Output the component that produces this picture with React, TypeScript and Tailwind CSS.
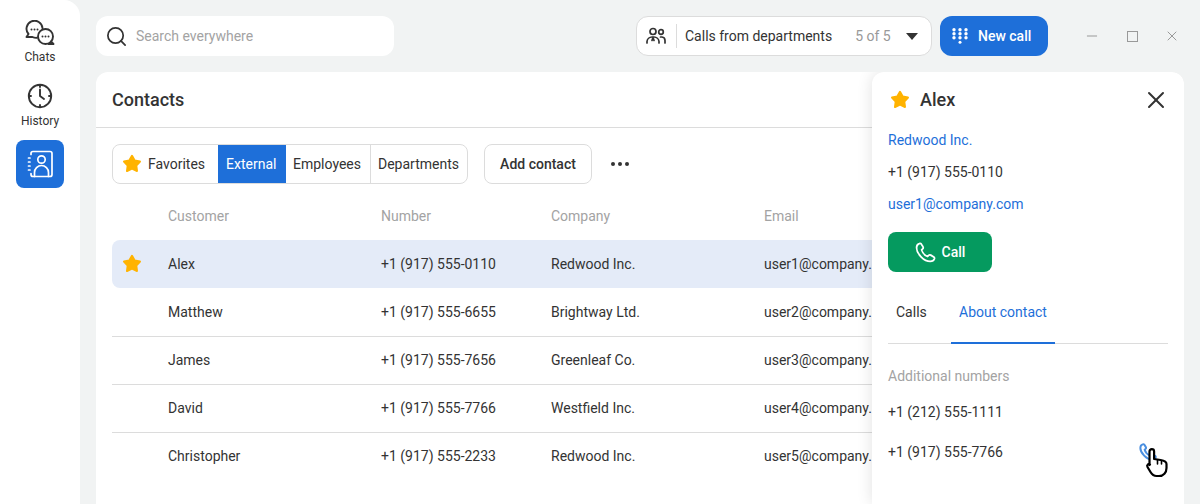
import { Minus, Search, X } from "lucide-react";

const ROWS = [
  { name: "Alex", number: "+1 (917) 555-0110", company: "Redwood Inc.", email: "user1@company.com", fav: true },
  { name: "Matthew", number: "+1 (917) 555-6655", company: "Brightway Ltd.", email: "user2@company.com" },
  { name: "James", number: "+1 (917) 555-7656", company: "Greenleaf Co.", email: "user3@company.com" },
  { name: "David", number: "+1 (917) 555-7766", company: "Westfield Inc.", email: "user4@company.com" },
  { name: "Christopher", number: "+1 (917) 555-2233", company: "Redwood Inc.", email: "user5@company.com" },
];

function Star({ size = 20 }: { size?: number }) {
  return (
    <svg width={size} height={size} viewBox="0 0 20 20" fill="#ffb300" stroke="#ffb300" strokeWidth="2" strokeLinejoin="round">
      <path d="M10 1.800l2.700 4.800 5.300 1-3.700 4 .7 5.400-5-2.300-5 2.300.7-5.400-3.700-4 5.300-1z" />
    </svg>
  );
}

function ChatsIcon() {
  return (
    <svg width="30" height="26" viewBox="0 0 30 26" fill="none" stroke="#333" strokeWidth="1.900" strokeLinecap="round" strokeLinejoin="round">
      <path d="M3.500 14A8 8 0 1 1 17.500 8.200M3.500 14L1.500 17H7.500a8 8 0 0 0 4.500.800" />
      <circle cx="20.500" cy="16.500" r="7.500" fill="#fff" />
      <path d="M26 21.500l2.500 2.500h-5" />
      <g fill="#333" stroke="none">
        <circle cx="6.500" cy="9.500" r="1" />
        <circle cx="9.500" cy="9.500" r="1" />
        <circle cx="12.500" cy="9.500" r="1" />
        <circle cx="17.500" cy="16.500" r="1" />
        <circle cx="20.500" cy="16.500" r="1" />
        <circle cx="23.500" cy="16.500" r="1" />
      </g>
    </svg>
  );
}

function HistoryIcon() {
  return (
    <svg width="26" height="26" viewBox="0 0 26 26" fill="none" stroke="#333" strokeWidth="1.900" strokeLinecap="round" strokeLinejoin="round">
      <circle cx="13" cy="13" r="11.200" />
      <path d="M13 6.500V13l4 3" />
      <path d="M13 2v2M13 22v2M2 13h2M22 13h2" />
    </svg>
  );
}

function ContactsIcon() {
  return (
    <svg width="26" height="28" viewBox="0 0 26 28" fill="none" stroke="#fff" strokeWidth="1.700" strokeLinecap="round" strokeLinejoin="round">
      <path d="M4 4.500V3.500A2 2 0 0 1 6 1.500h17a2 2 0 0 1 2 2v21a2 2 0 0 1-2 2H6a2 2 0 0 1-2-2V23.500" />
      <path d="M1.500 8h1.500M1.500 12h1.500M1.500 16h1.500M1.500 20h1.500" />
      <circle cx="14.500" cy="9.500" r="3.700" />
      <path d="M7.500 26.500v-4a7 7 0 0 1 14 0v4" />
    </svg>
  );
}

function PeopleIcon() {
  return (
    <svg width="20" height="18" viewBox="0 0 20 18" fill="none" stroke="#333" strokeWidth="1.700" strokeLinecap="round">
      <circle cx="7" cy="4.500" r="3" />
      <circle cx="15" cy="5" r="2.300" />
      <path d="M1 16v-1.500A5 5 0 0 1 6 10h2a5 5 0 0 1 5 4.500V16" />
      <path d="M7 10.500l-1 3M7 10.500l1 3" />
      <path d="M14.500 10H16a3.500 3.500 0 0 1 3 3.500V16" />
    </svg>
  );
}

function Dialpad() {
  return (
    <svg width="16" height="16" viewBox="0 0 16 16" fill="#fff">
      {[2, 8, 14].flatMap((x) => [1.700, 5.700, 9.700].map((y) => <circle key={`${x}-${y}`} cx={x} cy={y} r="1.700" />))}
      <circle cx="8" cy="14.200" r="1.500" />
    </svg>
  );
}

function PhoneIcon({ color = "#fff", size = 20, weight = 1.700 }: { color?: string; size?: number; weight?: number }) {
  return (
    <svg width={size} height={size} viewBox="0 0 20 20" fill="none" stroke={color} strokeWidth={weight} strokeLinejoin="round" strokeLinecap="round">
      <path d="M4 1.500C2.500 2 1.500 3.500 1.500 5.500C1.500 11 8.500 18.500 14.500 18.500C16.500 18.500 18 17.500 18.500 16C18.700 15.300 18.500 14.700 17.900 14.300L15 12.500C14.300 12.100 13.600 12.200 13 12.800L12 13.800C9.500 12.800 7 10 6.300 7.500L7.300 6.500C7.800 6 8 5.300 7.600 4.600L6 2C5.600 1.400 4.800 1.200 4 1.500Z" />
    </svg>
  );
}

function Cursor() {
  return (
    <svg width="24" height="30" viewBox="0 0 24 30" fill="#fff" stroke="#000" strokeWidth="2.200" strokeLinejoin="round" strokeLinecap="round">
      <path d="M5.500 17V3.500a2.300 2.300 0 0 1 4.600 0V11l6.500 1c3 .5 5.900 1 5.900 4v4c0 4.500-3 8-7.500 8h-2.500c-3 0-4.500-1.500-6-4l-3-5c-1.200-2 1.200-3.800 2.500-2.500z" />
      <path d="M13.500 12v4M17.500 13v3" strokeWidth="1.600" />
    </svg>
  );
}

export default function App() {
  return (
    <div className="flex h-[504px] w-full overflow-hidden bg-[#f1f3f3] font-['Roboto',sans-serif] text-sm text-[#333]">
      {/* Sidebar */}
      <aside className="flex w-20 shrink-0 flex-col items-center rounded-tr-2xl bg-white pt-5">
        <div className="flex h-[45px] flex-col items-center">
          <ChatsIcon />
          <span className="mt-[3px] text-xs leading-4">Chats</span>
        </div>
        <div className="mt-[18px] flex flex-col items-center">
          <HistoryIcon />
          <span className="mt-[4px] text-xs leading-4">History</span>
        </div>
        <div className="mt-[11px] flex h-12 w-12 items-center justify-center rounded-lg bg-[#1e6fd9]">
          <ContactsIcon />
        </div>
      </aside>

      <main className="flex min-w-0 flex-1 flex-col px-4 pt-4">
        {/* Top bar */}
        <header className="flex h-10 shrink-0 items-center">
          <div className="flex h-10 w-[298px] items-center rounded-xl bg-white pl-[9px]">
            <Search size={23} color="#333" strokeWidth={1.800} />
            <span className="ml-2 text-[#a3a3a3]">Search everywhere</span>
          </div>
          <div className="ml-[242px] flex h-10 w-[296px] items-center rounded-xl border border-[#dcdcdc] bg-white pl-[9px]">
            <PeopleIcon />
            <div className="ml-[10px] h-6 w-px bg-[#dcdcdc]" />
            <span className="ml-2">Calls from departments</span>
            <span className="ml-[23px] text-[#999]">5 of 5</span>
            <div className="ml-[15px] h-0 w-0 border-x-[6px] border-t-[7px] border-x-transparent border-t-[#333]" />
          </div>
          <div className="ml-2 flex h-10 w-[108px] items-center gap-[10px] rounded-xl bg-[#1e6fd9] pl-3 font-medium text-white">
            <Dialpad />
            <span>New call</span>
          </div>
          <div className="ml-[36px] flex items-center gap-6 text-[#999]">
            <Minus size={16} strokeWidth={1.500} />
            <div className="flex w-4 justify-center">
              <div className="h-[11px] w-[11px] border border-[#999]" />
            </div>
            <X size={16} strokeWidth={1.500} />
          </div>
        </header>

        {/* Contacts card */}
        <section className="relative mt-4 min-h-0 flex-1 overflow-hidden rounded-t-xl bg-white">
          <div className="flex h-[56px] items-center border-b border-[#dcdcdc] px-4">
            <h1 className="text-lg font-medium">Contacts</h1>
          </div>

          <div className="mt-4 ml-4 flex h-10 items-center">
            <div className="flex h-10 items-stretch overflow-hidden rounded-lg border border-[#dcdcdc]">
              <div className="flex w-[105px] items-center gap-[6px] pl-[9px]">
                <Star />
                <span>Favorites</span>
              </div>
              <div className="-my-px flex w-[68px] items-center bg-[#1e6fd9] pl-2 text-white">External</div>
              <div className="flex w-[85px] items-center border-r border-[#dcdcdc] pl-[7px]">Employees</div>
              <div className="flex w-[96px] items-center pl-[7px]">Departments</div>
            </div>
            <div className="ml-4 flex h-10 w-[108px] items-center justify-center rounded-lg border border-[#dcdcdc] font-medium">Add contact</div>
            <div className="ml-[19px] flex gap-[3px]">
              <span className="h-1 w-1 rounded-full bg-[#333]" />
              <span className="h-1 w-1 rounded-full bg-[#333]" />
              <span className="h-1 w-1 rounded-full bg-[#333]" />
            </div>
          </div>

          {/* Table */}
          <div className="mt-2 ml-4">
            <div className="flex h-[48px] items-center pl-14 text-[#a3a3a3]">
              <span className="w-[213px]">Customer</span>
              <span className="w-[170px]">Number</span>
              <span className="w-[213px]">Company</span>
              <span>Email</span>
            </div>
            {ROWS.map((row, i) => (
              <div
                key={row.name}
                className={
                  row.fav
                    ? "flex h-12 items-center rounded-l-lg bg-[#e4ebf8]"
                    : i === 1
                      ? "flex h-12 items-center"
                      : "flex h-12 items-center border-t border-[#dcdcdc] pb-px"
                }
              >
                <div className="flex w-14 pl-[10px]">{row.fav && <Star />}</div>
                <span className="w-[213px]">{row.name}</span>
                <span className="w-[170px]">{row.number}</span>
                <span className="w-[213px]">{row.company}</span>
                <span className="w-[108px] overflow-hidden whitespace-nowrap">{row.email}</span>
              </div>
            ))}
          </div>

          {/* Contact details panel */}
          <div className="absolute inset-y-0 right-0 w-[312px] rounded-t-xl bg-white px-4 shadow-[0_0_16px_rgba(0,0,0,0.12)]">
            <div className="flex h-[56px] items-center">
              <div className="ml-[2px]">
                <Star />
              </div>
              <span className="ml-[10px] text-lg font-medium">Alex</span>
              <X className="mr-[-2px] ml-auto" size={28} color="#333" strokeWidth={1.700} />
            </div>
            <div className="-mt-1 leading-8 text-[#1e6fd9]">Redwood Inc.</div>
            <div className="leading-8">+1 (917) 555-0110</div>
            <div className="leading-8 text-[#1e6fd9]">user1@company.com</div>
            <div className="mt-3 flex h-10 w-[104px] items-center justify-center gap-[6px] rounded-lg bg-[#059a5f] font-medium text-white">
              <PhoneIcon size={21} />
              <span>Call</span>
            </div>
            <div className="mt-4 flex h-14 items-stretch border-b border-[#dcdcdc]">
              <div className="flex w-[63px] items-center pb-2 pl-2">Calls</div>
              <div className="-mb-px flex w-[104px] items-center justify-center border-b-2 border-[#1e6fd9] pb-[6px] text-[#1e6fd9]">About contact</div>
            </div>
            <div className="mt-[22px] leading-5 text-[#a3a3a3]">Additional numbers</div>
            <div className="mt-4 leading-5">+1 (212) 555-1111</div>
            <div className="mt-5 leading-5">+1 (917) 555-7766</div>
            {/* pointer hovering the call action */}
            <div className="absolute top-[371px] left-[267px]">
              <PhoneIcon color="#4a8fe0" size={18} weight={2.200} />
            </div>
            <div className="absolute top-[376px] left-[272px]">
              <Cursor />
            </div>
          </div>
        </section>
      </main>
    </div>
  );
}
